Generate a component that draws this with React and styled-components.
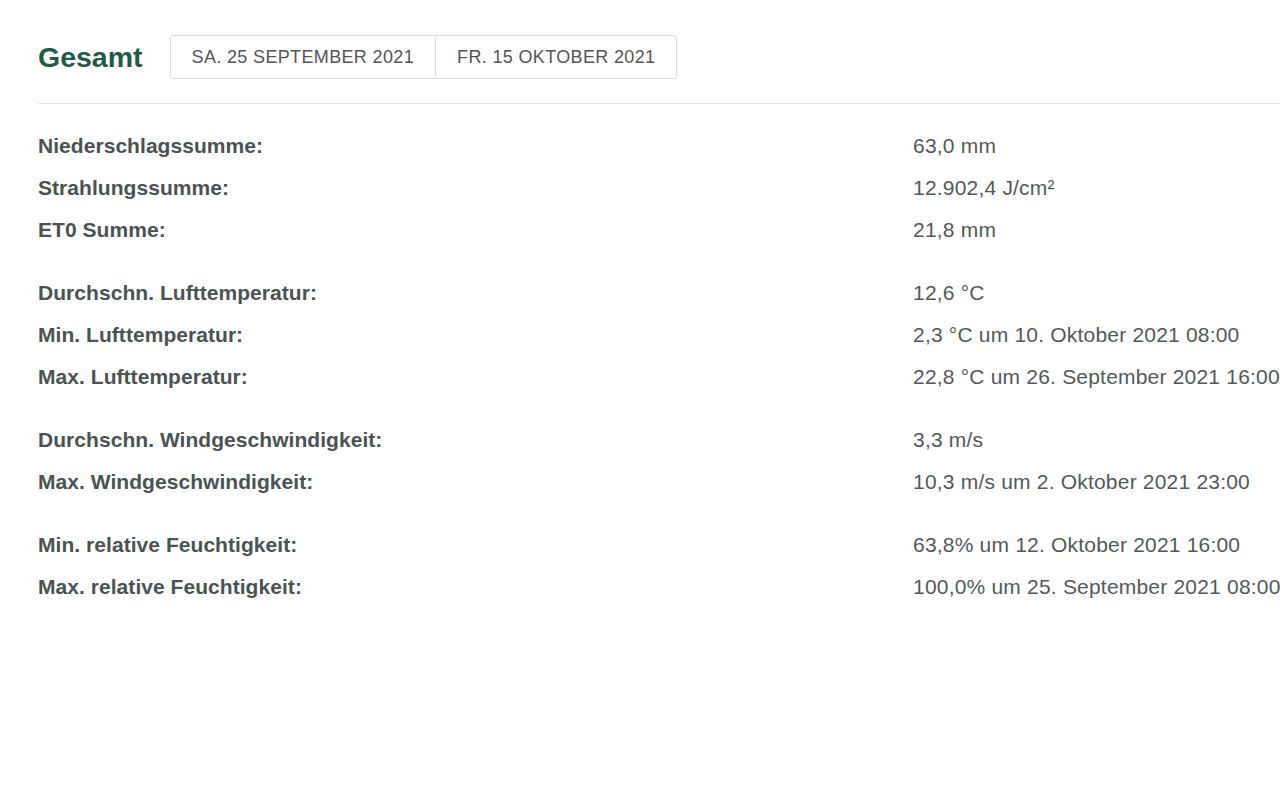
import React from "react";
import styled, { createGlobalStyle } from "styled-components";

const Global = createGlobalStyle`
  html, body { margin: 0; padding: 0; background: #fff; }
  body { font-family: "Liberation Sans", Arial, Helvetica, sans-serif; overflow: hidden; }
`;

const Page = styled.div`
  padding: 35px 0 0 38px;
  width: 1242px;
`;

const Header = styled.div`
  display: flex;
  align-items: center;
  height: 44px;
  gap: 27px;
`;

const Title = styled.h2`
  margin: 0;
  font-size: 28.5px;
  font-weight: 700;
  color: #1f5b47;
`;

const ButtonGroup = styled.div`
  display: flex;
  height: 44px;
  border: 1px solid #dcdcdc;
  border-radius: 3px;
  box-sizing: border-box;
`;

const DateButton = styled.button`
  font-family: inherit;
  font-size: 18px;
  letter-spacing: 0.35px;
  color: #555;
  background: #fff;
  border: none;
  border-left: ${(p) => (p.$first ? "none" : "1px solid #dcdcdc")};
  padding: 0 21px;
  text-transform: uppercase;
  cursor: pointer;
  border-radius: 3px;
`;

const Divider = styled.hr`
  margin: 24px 0 21px;
  border: none;
  border-top: 1px solid #e4e4e4;
`;

const Group = styled.div`
  display: grid;
  grid-template-columns: 875px 1fr;
  margin-bottom: 21px;
`;

const Label = styled.div`
  font-size: 21px;
  font-weight: 700;
  letter-spacing: 0.05px;
  line-height: 42px;
  color: #4a5351;
  white-space: nowrap;
`;

const Value = styled.div`
  font-size: 21px;
  letter-spacing: 0.2px;
  line-height: 42px;
  color: #535957;
  white-space: nowrap;
`;

const groups = [
  [
    ["Niederschlagssumme:", "63,0 mm"],
    ["Strahlungssumme:", "12.902,4 J/cm²"],
    ["ET0 Summe:", "21,8 mm"],
  ],
  [
    ["Durchschn. Lufttemperatur:", "12,6 °C"],
    ["Min. Lufttemperatur:", "2,3 °C um 10. Oktober 2021 08:00"],
    ["Max. Lufttemperatur:", "22,8 °C um 26. September 2021 16:00"],
  ],
  [
    ["Durchschn. Windgeschwindigkeit:", "3,3 m/s"],
    ["Max. Windgeschwindigkeit:", "10,3 m/s um 2. Oktober 2021 23:00"],
  ],
  [
    ["Min. relative Feuchtigkeit:", "63,8% um 12. Oktober 2021 16:00"],
    ["Max. relative Feuchtigkeit:", "100,0% um 25. September 2021 08:00"],
  ],
];

export default function App() {
  return (
    <Page>
      <Global />
      <Header>
        <Title>Gesamt</Title>
        <ButtonGroup>
          <DateButton $first>Sa. 25 September 2021</DateButton>
          <DateButton>Fr. 15 Oktober 2021</DateButton>
        </ButtonGroup>
      </Header>
      <Divider />
      {groups.map((g, i) => (
        <Group key={i}>
          {g.map(([l, v]) => (
            <React.Fragment key={l}>
              <Label>{l}</Label>
              <Value>{v}</Value>
            </React.Fragment>
          ))}
        </Group>
      ))}
    </Page>
  );
}
